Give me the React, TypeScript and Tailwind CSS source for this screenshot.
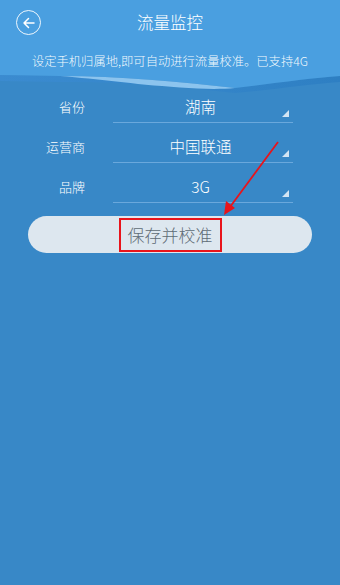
import React from 'react';

const rows = [
  { label: '省份', value: '湖南' },
  { label: '运营商', value: '中国联通' },
  { label: '品牌', value: '3G' },
];

function Corner() {
  return (
    <svg width="7" height="7" viewBox="0 0 7 7" className="absolute right-[4px] bottom-[5px]">
      <polygon points="7,0 7,7 0,7" fill="#d3e5f4" />
    </svg>
  );
}

export default function App() {
  return (
    <div
      className="relative w-[340px] h-[585px] bg-[#3888c7] overflow-hidden font-light"
      style={{ fontFamily: '"Noto Sans CJK SC", "Noto Sans", sans-serif' }}
    >
      {/* header */}
      <div className="relative bg-[#4a9fe0] h-[70px]">
        <div className="flex items-center h-[45px] px-[16px]">
          <div className="w-[25px] h-[25px] rounded-full border-[1.5px] border-white/90 flex items-center justify-center">
            <svg width="14" height="14" viewBox="0 0 14 14" fill="none" stroke="white" strokeWidth="1.5" strokeLinecap="round" strokeLinejoin="round">
              <path d="M12 7H2M6.5 2.5L2 7l4.5 4.5" />
            </svg>
          </div>
        </div>
        <div className="absolute left-0 right-0 top-[10px] text-center text-white text-[16.5px] leading-[24px]">流量监控</div>
        <div className="text-center text-white/95 text-[12.3px] leading-[18px] mt-[7px]">设定手机归属地,即可自动进行流量校准。已支持4G</div>
      </div>
      {/* wave */}
      <svg width="340" height="26" viewBox="0 0 340 26" className="block">
        <defs>
          <linearGradient id="band" x1="0" x2="1" y1="0" y2="0">
            <stop offset="0" stopColor="#3b8bd0" />
            <stop offset="0.6" stopColor="#3485c9" />
            <stop offset="1" stopColor="#2e7fc3" />
          </linearGradient>
        </defs>
        <rect width="340" height="26" fill="#3888c7" />
        <path d="M0 5 C20 5 40 6 60 6 C120 6 180 12 235 18 C270 14 310 8 340 6 V12 C310 14 270 20 235 23 C180 17 120 11 60 12 C40 12 20 11 0 11 Z" fill="url(#band)" />
        <path d="M0 0 H340 V6 C310 8 270 14 235 18 C180 12 120 6 60 6 C40 6 20 5 0 5 Z" fill="#4a9fe0" />
        <path d="M60 6 C120 6 180 12 235 18 C220 19.5 200 19 180 17.5 C130 14 100 9 60 6 Z" fill="#8cc4ee" />
      </svg>
      {/* form */}
      <div className="flex flex-col gap-[7px] -mt-[6px]">
        {rows.map((r) => (
          <div key={r.label} className="flex items-end h-[33px]">
            <div className="w-[85px] text-right text-white text-[13px] leading-[20px] pb-[6px]">{r.label}</div>
            <div className="relative ml-[28px] w-[180px] h-[33px] border-b border-[#6aa8dc] flex items-center justify-center">
              <span className="text-white text-[15.5px] leading-[22px] -ml-[5px]">{r.value}</span>
              <Corner />
            </div>
          </div>
        ))}
      </div>
      {/* button */}
      <div className="px-[28px] mt-[13px]">
        <div className="h-[37px] rounded-full bg-[#dde7ef] flex items-center justify-center">
          <div className="relative">
            <span className="block text-[#5d6b75] text-[17px] leading-[24px] px-[6px]">保存并校准</span>
            <div className="absolute -left-[3px] -right-[3px] -top-[5px] -bottom-[5px] border-2 border-[#e8141b]" />
          </div>
        </div>
      </div>
      {/* arrow */}
      <svg width="340" height="585" className="absolute left-0 top-0 pointer-events-none">
        <line x1="278" y1="142" x2="230" y2="207" stroke="#e8141b" strokeWidth="1.8" />
        <polygon points="224,215 226,201 235,208" fill="#e8141b" />
      </svg>
    </div>
  );
}
